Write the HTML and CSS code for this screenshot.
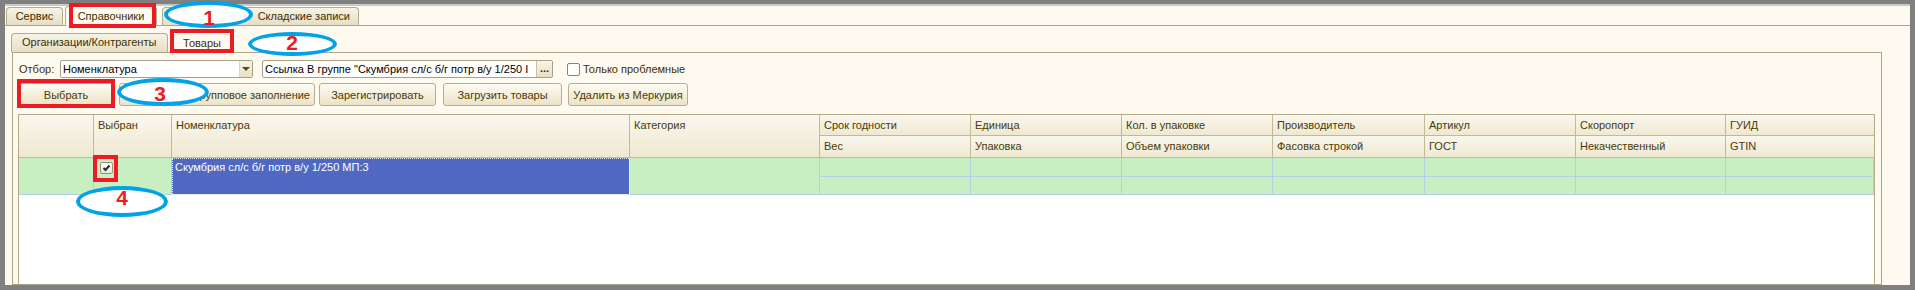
FILE: index.html
```html
<!DOCTYPE html>
<html lang="ru">
<head>
<meta charset="utf-8">
<title>Справочники</title>
<link rel="stylesheet" href="styles.css">
</head>
<body>
<div class="window">
  <div class="top-tabs">
    <div class="tab tab-serv">Сервис</div>
    <div class="tab tab-active tab-ref">Справочники</div>
    <div class="tab tab-third">Складские записи</div>
  </div>
  <div class="page">
    <div class="sub-tabs">
      <div class="tab tab-org">Организации/Контрагенты</div>
      <div class="tab tab-active tab-goods">Товары</div>
    </div>
    <div class="panel">
      <div class="filter-row">
        <div class="label">Отбор:</div>
        <div class="combo combo-kind">
          <div class="txt">Номенклатура</div>
          <div class="dd"><span class="tri"></span></div>
        </div>
        <div class="combo combo-val">
          <div class="txt">Ссылка В группе "Скумбрия сл/с б/г потр в/у 1/250 I</div>
          <div class="dots">...</div>
        </div>
        <div class="chk-box"></div>
        <div class="chk-label">Только проблемные</div>
      </div>
      <div class="btn-row">
        <div class="btn b1">Выбрать</div>
        <div class="btn b2">Групповое заполнение</div>
        <div class="btn b3">Зарегистрировать</div>
        <div class="btn b4">Загрузить товары</div>
        <div class="btn b5">Удалить из Меркурия</div>
      </div>
      <div class="grid">
        <div class="ghead">
          <div class="hc span2"></div>
          <div class="hc span2">Выбран</div>
          <div class="hc span2">Номенклатура</div>
          <div class="hc span2">Категория</div>
          <div class="hc">Срок годности</div>
          <div class="hc">Единица</div>
          <div class="hc">Кол. в упаковке</div>
          <div class="hc">Производитель</div>
          <div class="hc">Артикул</div>
          <div class="hc">Скоропорт</div>
          <div class="hc last">ГУИД</div>
          <div class="hc r2">Вес</div>
          <div class="hc r2">Упаковка</div>
          <div class="hc r2">Объем упаковки</div>
          <div class="hc r2">Фасовка строкой</div>
          <div class="hc r2">ГОСТ</div>
          <div class="hc r2">Некачественный</div>
          <div class="hc r2 last">GTIN</div>
        </div>
        <div class="grow">
          <div class="dc span2"></div>
          <div class="dc span2 chk-cell">
            <div class="cb"><svg width="11" height="10" viewBox="0 0 11 10"><path d="M2.5 5 L4.5 7 L8.5 2.5" fill="none" stroke="#2b2b2b" stroke-width="2"/></svg></div>
          </div>
          <div class="dc span2 sel">Скумбрия сл/с б/г потр в/у 1/250 МП:3</div>
          <div class="dc span2"></div>
          <div class="dc"></div><div class="dc"></div><div class="dc"></div><div class="dc"></div><div class="dc"></div><div class="dc"></div><div class="dc last"></div>
          <div class="dc"></div><div class="dc"></div><div class="dc"></div><div class="dc"></div><div class="dc"></div><div class="dc"></div><div class="dc last"></div>
        </div>
        <div class="gempty"></div>
      </div>
    </div>
  </div>
</div>

<div class="ring ring1"></div>
<div class="ring ring2"></div>
<div class="ring ring3"></div>
<div class="ring ring4"></div>
<div class="num n1">1</div>
<div class="num n2">2</div>
<div class="num n3">3</div>
<div class="num n4">4</div>
<div class="rbox rb1"></div>
<div class="rbox rb2"></div>
<div class="rbox rb3"></div>
<div class="rbox rb4"></div>
</body>
</html>
```
FILE: styles.css
```css
* { box-sizing: border-box; }
html, body { margin: 0; }
body {
  width: 1915px;
  height: 290px;
  overflow: hidden;
  background: #808080;
  padding: 4px 5px 5px 5px;
  font-family: "Liberation Sans", Arial, sans-serif;
  font-size: 11px;
  color: #4a3a08;
  position: relative;
}
.window {
  height: 281px;
  border-top: 2px solid #c8c8c8;
  background: #fffaef;
  display: flex;
  flex-direction: column;
}

/* tabs */
.top-tabs, .sub-tabs {
  display: flex;
  align-items: flex-end;
  height: 20px;
  border-bottom: 1px solid #aca486;
  flex: none;
}
.top-tabs { padding-left: 1px; }
.tab {
  height: 18px;
  border: 1px solid #b4ab8c;
  border-bottom: none;
  border-radius: 4px 4px 0 0;
  background: linear-gradient(#f7f3e5, #e6dec5);
  line-height: 17px;
  text-align: center;
  white-space: nowrap;
  color: #3d3000;
}
.tab-active {
  background: #fffaef;
  margin-bottom: -1px;
  position: relative;
}
.tab-serv { width: 57px; }
.tab-ref { width: 92px; height: 20px; margin-left: 2px; padding-top: 1px; }
.tab-third { width: 197px; margin-left: 5px; text-align: right; padding-right: 8px; }

.page {
  flex: 1;
  display: flex;
  flex-direction: column;
  padding: 7px 28px 0 7px;
  min-height: 0;
}
.tab-org { width: 157px; height: 19px; margin-left: -1px; text-align: left; padding-left: 10px; }
.tab-goods { width: 64px; height: 22px; margin-left: 2px; padding-top: 3px; }

.panel {
  flex: 1;
  border: 1px solid #aca486;
  border-top: none;
  display: flex;
  flex-direction: column;
  padding: 7px 0 0 5px;
  min-height: 0;
}

/* filter row */
.filter-row {
  display: flex;
  align-items: center;
  height: 18px;
  flex: none;
}
.label { width: 42px; padding-left: 1px; color: #3d3000; }
.combo {
  height: 18px;
  border: 1px solid #a8a084;
  border-radius: 2px;
  background: #fff;
  display: flex;
  overflow: hidden;
}
.combo .txt {
  flex: 1;
  min-width: 0;
  line-height: 16px;
  padding-left: 2px;
  color: #000;
  white-space: nowrap;
  overflow: hidden;
}
.combo-kind { width: 193px; }
.combo-val { width: 291px; margin-left: 9px; }
.dd {
  width: 13px;
  flex: none;
  background: linear-gradient(#f8f4e6, #e7dfc6);
  border-left: 1px solid #ddd5bd;
  display: flex;
  align-items: center;
  justify-content: center;
}
.tri {
  width: 0; height: 0;
  border-left: 4px solid transparent;
  border-right: 4px solid transparent;
  border-top: 4px solid #5b4a12;
}
.dots {
  width: 16px;
  flex: none;
  background: linear-gradient(#f8f4e6, #e7dfc6);
  border-left: 1px solid #c9c1a6;
  color: #3d3000;
  font-weight: bold;
  line-height: 14px;
  text-align: center;
}
.chk-box {
  width: 13px;
  height: 13px;
  margin-left: 14px;
  border: 1px solid #8d846a;
  border-radius: 2px;
  background: #fff;
}
.chk-label { margin-left: 3px; color: #3d3000; }

/* buttons */
.btn-row {
  display: flex;
  height: 23px;
  margin-top: 5px;
  flex: none;
}
.btn {
  height: 23px;
  border: 1px solid #b8ae8e;
  border-radius: 3px;
  background: linear-gradient(#fdfbf3, #ebe3c8);
  display: flex;
  align-items: center;
  justify-content: center;
  white-space: nowrap;
  color: #4a3a06;
}
.b1 { width: 94px; margin-left: 1px; }
.b2 { width: 196px; margin-left: 6px; justify-content: flex-end; padding-right: 4px; }
.b3 { width: 117px; margin-left: 4px; }
.b4 { width: 119px; margin-left: 7px; }
.b5 { width: 120px; margin-left: 6px; }

/* grid */
.grid {
  width: 1857px;
  flex: 1;
  margin-top: 8px;
  border: 1px solid #b4aa88;
  border-bottom: none;
  background: #fff;
  display: flex;
  flex-direction: column;
  min-height: 0;
}
.ghead, .grow {
  display: grid;
  grid-template-columns: 75px 78px 458px 190px 151px 151px 151px 152px 151px 150px 148px;
}
.ghead { grid-template-rows: 21px 22px; }
.grow { grid-template-rows: 19px 18px; }
.hc {
  border-right: 1px solid #c5b993;
  border-bottom: 1px solid #c5b993;
  background: linear-gradient(#f9f7ee, #efe8d1);
  padding: 4px 0 0 4px;
  line-height: 13px;
  white-space: nowrap;
  overflow: hidden;
  color: #4a3a08;
}
.hc.r2 { padding-top: 4px; }
.span2 { grid-row: span 2; }
.last { border-right: none; }
.dc {
  border-right: 1px solid #b7cfe4;
  border-bottom: 1px solid #b7cfe4;
  background: #c7efc1;
}
.chk-cell { padding: 4px 0 0 6px; }
.cb {
  width: 13px;
  height: 12px;
  border: 1px solid #96927e;
  border-radius: 2px;
  background: linear-gradient(#ffffff, #e9e7de);
  display: flex;
  align-items: center;
  justify-content: center;
}
.cb svg { display: block; }
.sel {
  background: #5068c1;
  color: #fff;
  padding: 3px 0 0 3px;
  line-height: 13px;
  white-space: nowrap;
  position: relative;
  border-right-color: #e6ecf6;
  border-bottom-color: #e6ecf6;
}
.sel::after {
  content: "";
  position: absolute;
  inset: 0;
  border: 1px dotted rgba(255,255,255,0.85);
  border-right: none;
  border-bottom: none;
}
.gempty { flex: 1; background: #fff; }

/* annotations */
.ring {
  position: absolute;
  border: 4px solid #00a2e8;
  border-radius: 50%;
  background: #fff;
}
.ring1 { left: 164px; top: 1px; width: 89px; height: 27px; }
.ring2 { left: 248px; top: 32px; width: 89px; height: 24px; }
.ring3 { left: 117px; top: 78px; width: 92px; height: 28px; }
.ring4 { left: 76px; top: 186px; width: 92px; height: 31px; }
.num {
  position: absolute;
  width: 20px;
  text-align: center;
  color: #ed1c24;
  font-family: "Liberation Sans", Arial, sans-serif;
  font-weight: bold;
  font-size: 21px;
  line-height: 21px;
}
.n1 { left: 199px; top: 7px; }
.n2 { left: 282px; top: 32px; }
.n3 { left: 150px; top: 83px; }
.n4 { left: 112px; top: 187px; }
.rbox {
  position: absolute;
  border: 4px solid #ed1c24;
}
.rb1 { left: 69px; top: 3px; width: 87px; height: 25px; }
.rb2 { left: 170px; top: 29px; width: 64px; height: 24px; }
.rb3 { left: 17px; top: 79px; width: 98px; height: 29px; }
.rb4 { left: 93px; top: 155px; width: 25px; height: 27px; }
```
